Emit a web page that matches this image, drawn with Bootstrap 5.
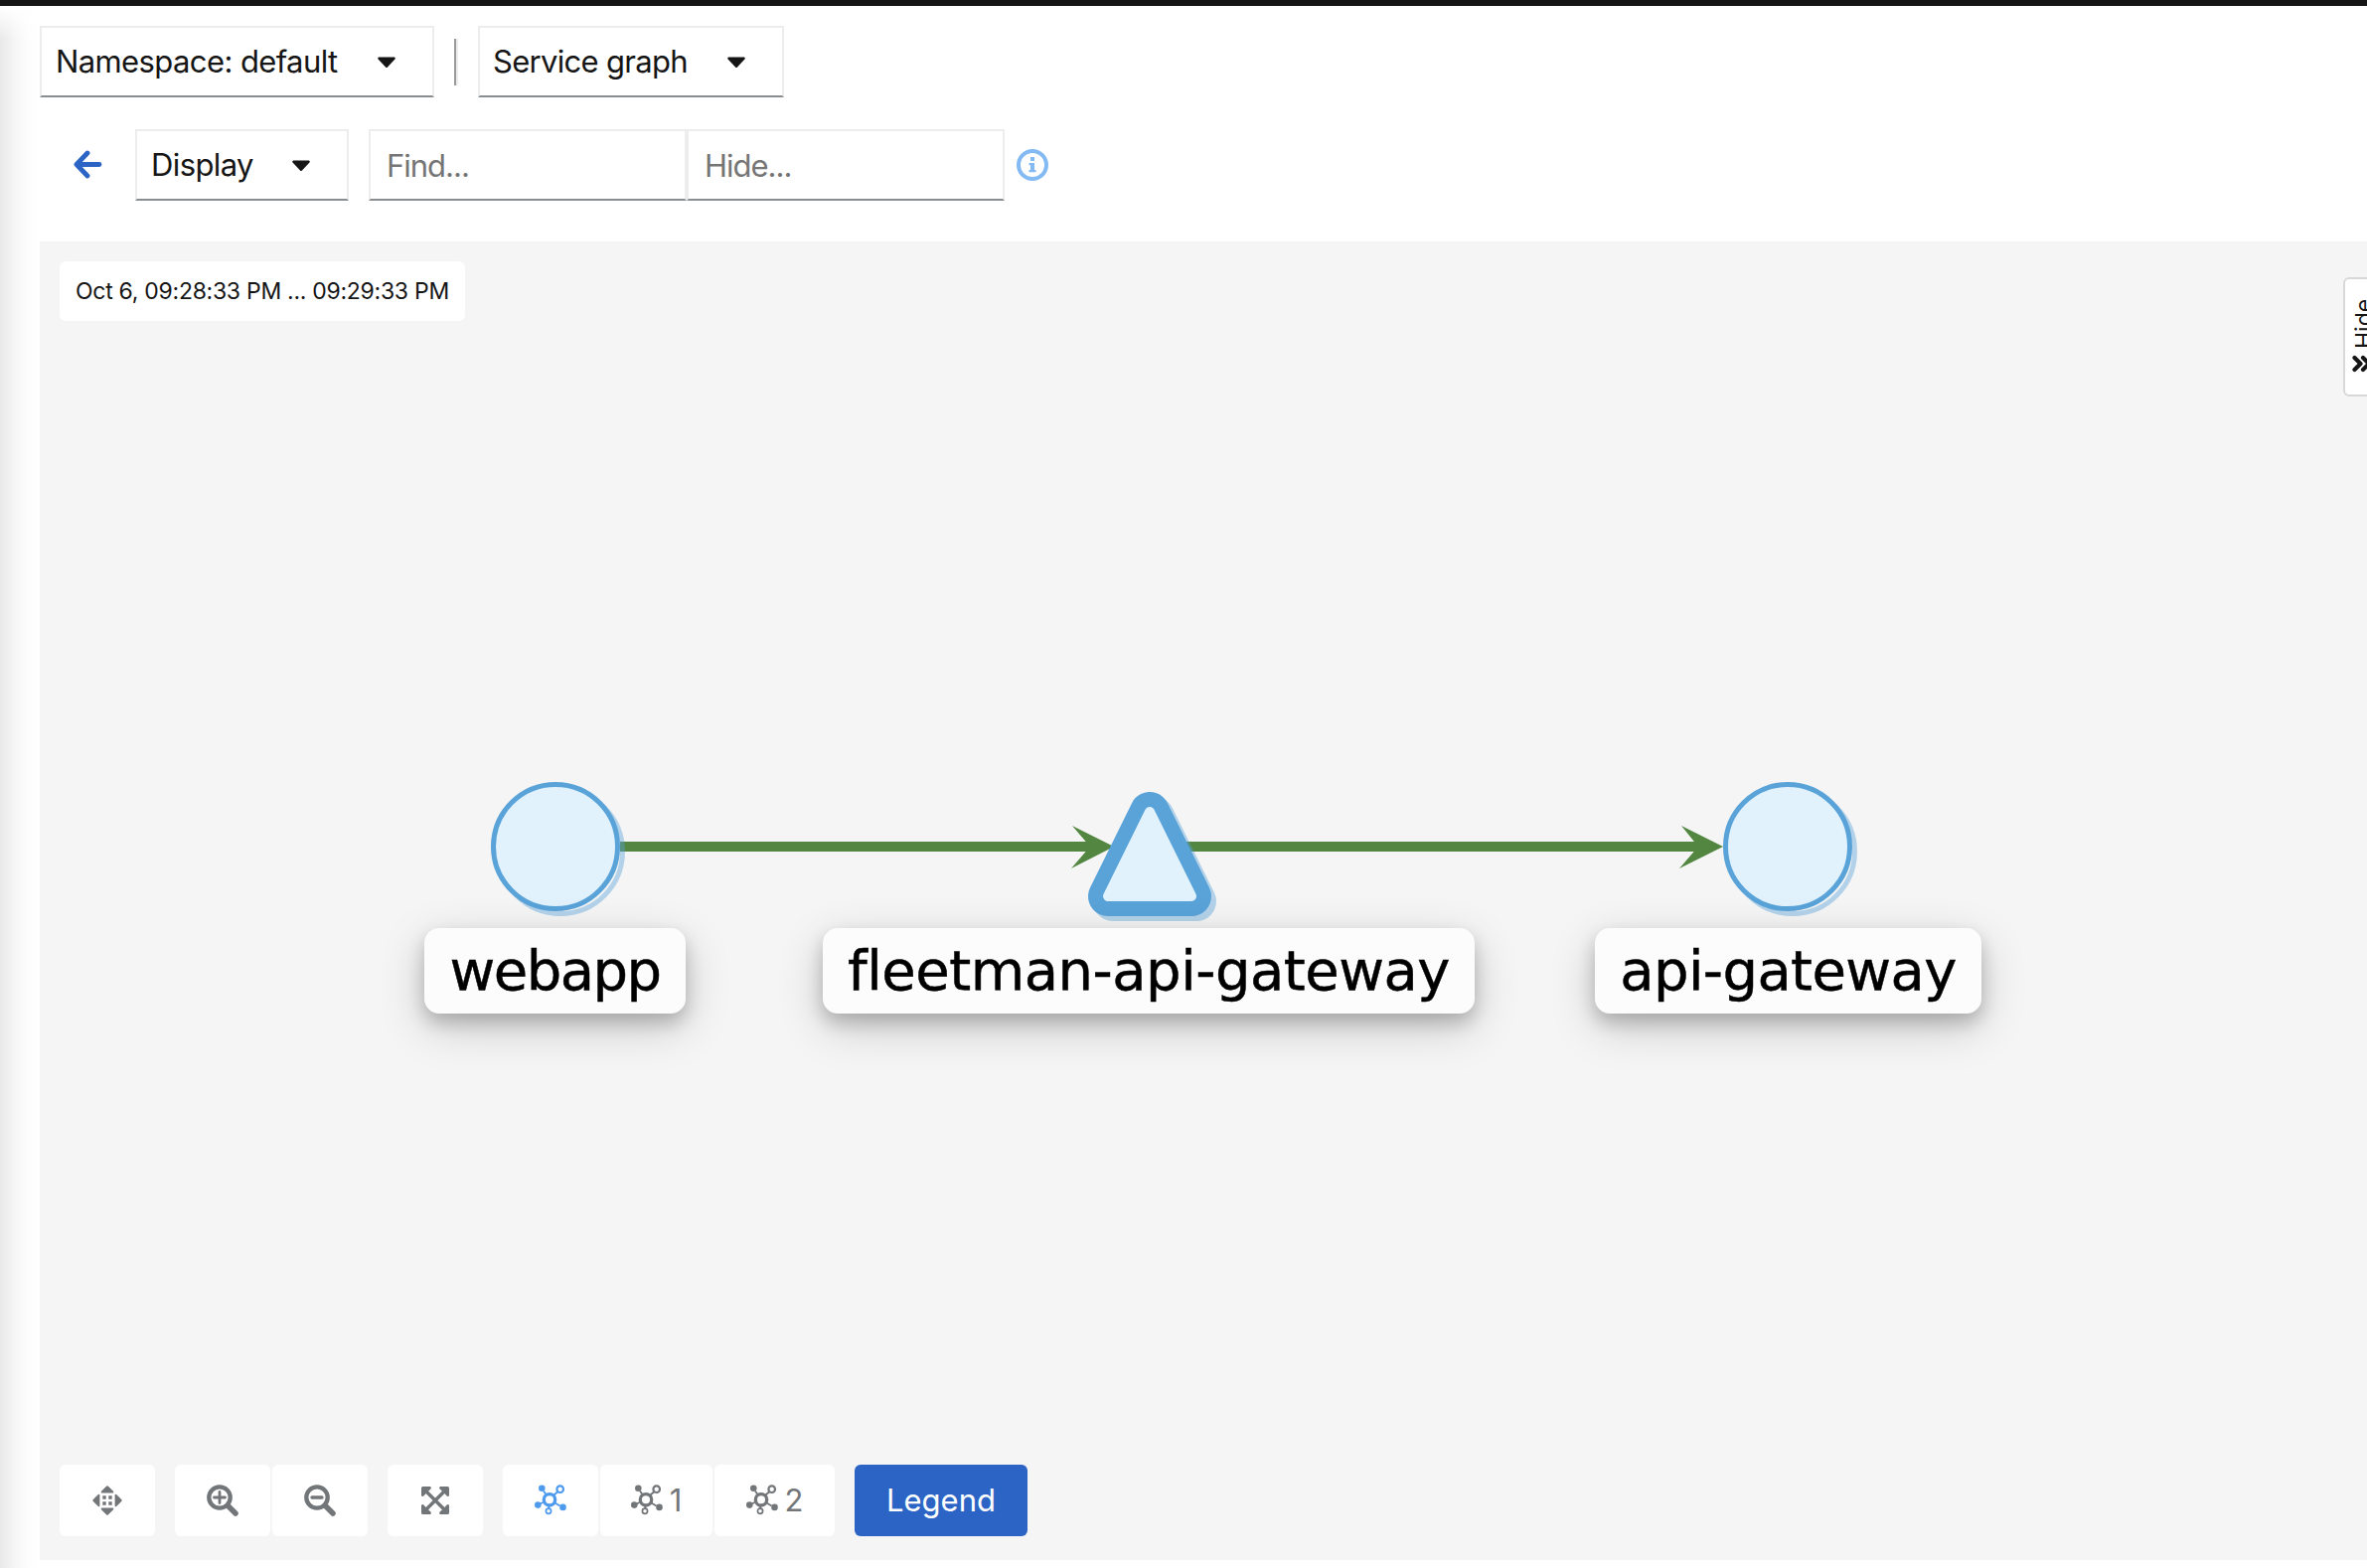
<!DOCTYPE html>
<html lang="en">
<head>
<meta charset="utf-8">
<meta name="viewport" content="width=device-width, initial-scale=1">
<title>Service graph</title>
<link href="https://cdn.jsdelivr.net/npm/bootstrap@5.3.0/dist/css/bootstrap.min.css" rel="stylesheet">
<style>
  body { font-family: Inter, "Open Sans", sans-serif; color: #151515; background: #fff; overflow: hidden; }
  .app { width: 2382px; height: 1578px; }
  .masthead { height: 6px; background: #151515; }
  .edge-shade { width: 40px; background: linear-gradient(180deg, #fff 0, rgba(255,255,255,0) 34px), linear-gradient(90deg, #e9e9e9 0, #ededed 5px, #f7f7f7 17px, #fdfdfd 28px, #fff 40px); }
  .filters { padding-top: 20px; gap: 20px; }
  .tools { padding: 32px 0 41px 33px; }
  .pick { height: 72px; border: 2px solid #ededed; border-bottom-color: #8a8d90; border-radius: 0; background: #fff; color: #151515; font-size: 31px; letter-spacing: -.6px; line-height: 1; padding: 0 36px 2px 14px; white-space: nowrap; }
  .pick svg { margin-top: 3px; }
  .pick-ns { width: 397px; }
  .pick-kind { width: 308px; letter-spacing: -.7px; padding-left: 13px; }
  .pick-display { width: 215px; margin: 0 20px 0 33px; }
  .find { width: 320px; height: 72px; border: 2px solid #ededed; border-bottom-color: #8a8d90; border-radius: 0; padding: 0 0 0 16px; font-size: 31px; letter-spacing: -1px; line-height: 1; color: #151515; outline: 0; background: #fff; }
  .find::placeholder { color: #757575; opacity: 1; }
  .info { margin-left: 12px; }
  .rule { width: 4px; height: 47px; background: linear-gradient(90deg, #9a9a9a 50%, #ededed 50%); }
  .canvas { background: #f5f5f5; height: 1327px; }
  .graph { left: 0; top: 0; width: 2342px; height: 1327px; }
  .tag { height: 86px; top: 691px; border-radius: 15px; background: #fcfcfc; color: #000; font: 56px/86px "DejaVu Sans", sans-serif; -webkit-text-stroke: .5px #000; text-align: center; white-space: nowrap; box-shadow: 0 9px 18px rgba(0,0,0,.2), 0 14px 46px rgba(0,0,0,.19); }
  .tag-web { left: 387px; width: 263px; letter-spacing: -1.5px; }
  .tag-fleet { left: 788px; width: 656px; letter-spacing: -.5px; }
  .tag-api { left: 1565px; width: 389px; letter-spacing: -.6px; }
  .stamp { left: 20px; top: 20px; background: #fff; border-radius: 6px; height: 60px; width: 408px; padding-left: 16px; font-size: 23px; letter-spacing: -.28px; line-height: 60px; white-space: nowrap; }
  .side-tab { left: 2318px; top: 36px; width: 44px; height: 120px; border: 2px solid #d8d8d8; border-radius: 6px; background: #fff; padding: 18px 0 0 7px; }
  .side-tab span { writing-mode: vertical-rl; transform: rotate(180deg); font-size: 23px; line-height: 24px; height: 52px; }
  .side-tab svg { margin-top: 6px; }
  .bar { left: 20px; bottom: 24px; gap: 20px; }
  .bar-set { gap: 2px; }
  .tile { width: 96px; height: 72px; border: 0; border-radius: 6px; background: #fff; color: #737679; padding: 0 0 1px; font-size: 31px; line-height: 1; gap: 7px; }
  .tile.on { color: #4e9bee; }
  .tile-1 { width: 113px; }
  .tile-2 { width: 121px; }
  .legend-btn { width: 174px; height: 72px; border: 0; border-radius: 6px; background: #2b64c5; color: #fff; font-size: 31px; padding: 0; }
</style>
</head>
<body>
<svg width="0" height="0" class="position-absolute">
  <symbol id="caret" viewBox="0 0 20 12"><path d="M2 .5h16q1.500 1 .5 2L11 10.500q-1 1-2 0L1.500 2.500q-1-1 .5-2z" fill="currentColor"/></symbol>
  <symbol id="topo" viewBox="0 0 32 31">
    <g fill="none" stroke="currentColor">
      <circle cx="15" cy="15.300" r="5.700" stroke-width="3.300"/>
      <circle cx="25.700" cy="4.700" r="3.300" stroke-width="2.200"/>
      <circle cx="14" cy="26.800" r="2.600" stroke-width="1.700"/>
      <path d="M19 11 23.500 7M14.300 21.500v3M9 6.500l2.500 3.500M20 18.300l5.500 3.200M5.500 19.500l4-2" stroke-width="1.900"/>
    </g>
    <g fill="currentColor"><circle cx="7.300" cy="3.700" r="3.300"/><circle cx="3.300" cy="20.600" r="3.300"/><circle cx="28.500" cy="22.900" r="3.300"/></g>
  </symbol>
</svg>
<div class="app d-flex flex-column overflow-hidden">
  <header class="masthead flex-shrink-0"></header>
  <div class="d-flex flex-grow-1">
    <div class="edge-shade flex-shrink-0"></div>
    <main class="flex-grow-1 d-flex flex-column">
      <div class="filters d-flex align-items-center">
        <button class="pick pick-ns d-flex align-items-center justify-content-between"><span>Namespace: default</span><svg width="20" height="12"><use href="#caret"/></svg></button>
        <div class="rule"></div>
        <button class="pick pick-kind d-flex align-items-center justify-content-between"><span>Service graph</span><svg width="20" height="12"><use href="#caret"/></svg></button>
      </div>
      <div class="tools d-flex align-items-center">
        <svg width="30" height="30" viewBox="0 0 30 30"><path d="M15 3 4 14.500l11 11.500M5 14.500h22" fill="none" stroke="#2b64c5" stroke-width="4.800" stroke-linecap="round" stroke-linejoin="round"/></svg>
        <button class="pick pick-display d-flex align-items-center justify-content-between"><span>Display</span><svg width="20" height="12"><use href="#caret"/></svg></button>
        <input class="find" placeholder="Find..."><input class="find" placeholder="Hide...">
        <svg class="info" width="32" height="32" viewBox="0 0 32 32"><circle cx="16" cy="16" r="14" fill="none" stroke="#83baf3" stroke-width="4"/><path d="M14 8h4v4h-4zM12.500 14H18v7h1.500v2.200h-7V21H14v-4.800h-1.500z" fill="#83baf3"/></svg>
      </div>
      <section class="canvas position-relative flex-shrink-0">
        <svg class="graph position-absolute" viewBox="40 243 2342 1327">
          <g fill="none" stroke="#528641" stroke-width="10"><path d="M624 852h476M1190 852h522"/></g>
          <g fill="#528641"><path d="M1079 831l42 21-43 22 19-22zM1692 831l42 21-44 22 19-22z"/></g>
          <g fill="none" stroke="#59a3d9" stroke-opacity=".42" stroke-width="5"><circle cx="564" cy="857" r="62.500"/><circle cx="1804" cy="857" r="62.500"/></g>
          <g fill="#e1f2fd" stroke="#59a3d9" stroke-width="5"><circle cx="559" cy="852" r="62.500"/><circle cx="1799" cy="852" r="62.500"/></g>
          <g stroke-linejoin="round">
            <path d="M1162 822 1120 907H1204z" fill="#59a3d9" stroke="#59a3d9" stroke-width="40" opacity=".42"/>
            <path d="M1157 817 1115 902H1199z" fill="#59a3d9" stroke="#59a3d9" stroke-width="40"/>
            <path d="M1157 817 1115 902H1199z" fill="#e1f2fd" stroke="#e1f2fd" stroke-width="10"/>
          </g>
        </svg>
        <div class="tag tag-web position-absolute">webapp</div>
        <div class="tag tag-fleet position-absolute">fleetman-api-gateway</div>
        <div class="tag tag-api position-absolute">api-gateway</div>
        <div class="stamp position-absolute">Oct 6, 09:28:33 PM ... 09:29:33 PM</div>
        <div class="side-tab position-absolute d-flex flex-column align-items-start"><span>Hide</span><svg class="flex-shrink-0" width="24" height="18" viewBox="0 0 24 18"><path d="M2.500 3 8.500 9l-6 6M11 3l6 6-6 6" fill="none" stroke="#151515" stroke-width="4.200" stroke-linejoin="round" stroke-linecap="round"/></svg></div>
        <div class="bar position-absolute d-flex">
          <button class="tile d-flex align-items-center justify-content-center"><svg width="30" height="30" viewBox="0 0 30 30" fill="currentColor"><path d="M14 .8q1-1 2 0l5 5q.8 1.400-.5 1.600h-11q-1.300-.2-.5-1.600zM14 29.200q1 1 2 0l5-5q.8-1.400-.5-1.600h-11q-1.300.2-.5 1.600zM.8 14q-1 1 0 2l5 5q1.400.8 1.600-.5v-11q-.2-1.300-1.600-.5zM29.200 14q1 1 0 2l-5 5q-1.400.8-1.600-.5v-11q.2-1.300 1.600-.5zM10.300 10.300h3.400v3.400h-3.400zM16.300 10.300h3.400v3.400h-3.400zM10.300 16.300h3.400v3.400h-3.400zM16.300 16.300h3.400v3.400h-3.400z"/></svg></button>
          <div class="bar-set d-flex">
            <button class="tile d-flex align-items-center justify-content-center"><svg width="32" height="32" viewBox="0 0 32 32" fill="none" stroke="currentColor"><circle cx="13" cy="13" r="10.700" stroke-width="4.300"/><path d="M13 7.500v11M7.500 13h11" stroke-width="2.800" stroke-linecap="round"/><path d="M22.500 22.500 29 29" stroke-width="5.500" stroke-linecap="round"/></svg></button>
            <button class="tile d-flex align-items-center justify-content-center"><svg width="32" height="32" viewBox="0 0 32 32" fill="none" stroke="currentColor"><circle cx="13" cy="13" r="10.700" stroke-width="4.300"/><path d="M8 13h10" stroke-width="3.400" stroke-linecap="round"/><path d="M22.500 22.500 29 29" stroke-width="5.500" stroke-linecap="round"/></svg></button>
          </div>
          <button class="tile d-flex align-items-center justify-content-center"><svg width="28" height="28" viewBox="0 0 28 28"><path d="M5 5l18 18M23 5 5 23" stroke="currentColor" stroke-width="3.400"/><path fill="currentColor" d="M1.500 0h7.500q1.500.8.800 2L2 9.800Q.6 10.500 0 9V1.500Q0 0 1.500 0zM26.500 0H19q-1.500.8-.8 2l7.800 7.800q1.400.7 2-.8V1.500Q28 0 26.500 0zM1.500 28h7.500q1.500-.8.800-2L2 18.200q-1.400-.7-2 .8v7.500Q0 28 1.500 28zM26.500 28H19q-1.500-.8-.8-2l7.800-7.800q1.400-.7 2 .8v7.500q0 1.500-1.500 1.500z"/></svg></button>
          <div class="bar-set d-flex">
            <button class="tile on d-flex align-items-center justify-content-center"><svg width="32" height="31"><use href="#topo"/></svg></button>
            <button class="tile tile-1 d-flex align-items-center justify-content-center"><svg width="32" height="31"><use href="#topo"/></svg><span>1</span></button>
            <button class="tile tile-2 d-flex align-items-center justify-content-center"><svg width="32" height="31"><use href="#topo"/></svg><span>2</span></button>
          </div>
          <button class="legend-btn">Legend</button>
        </div>
      </section>
    </main>
  </div>
</div>
<script src="https://cdn.jsdelivr.net/npm/bootstrap@5.3.0/dist/js/bootstrap.bundle.min.js"></script>
</body>
</html>
